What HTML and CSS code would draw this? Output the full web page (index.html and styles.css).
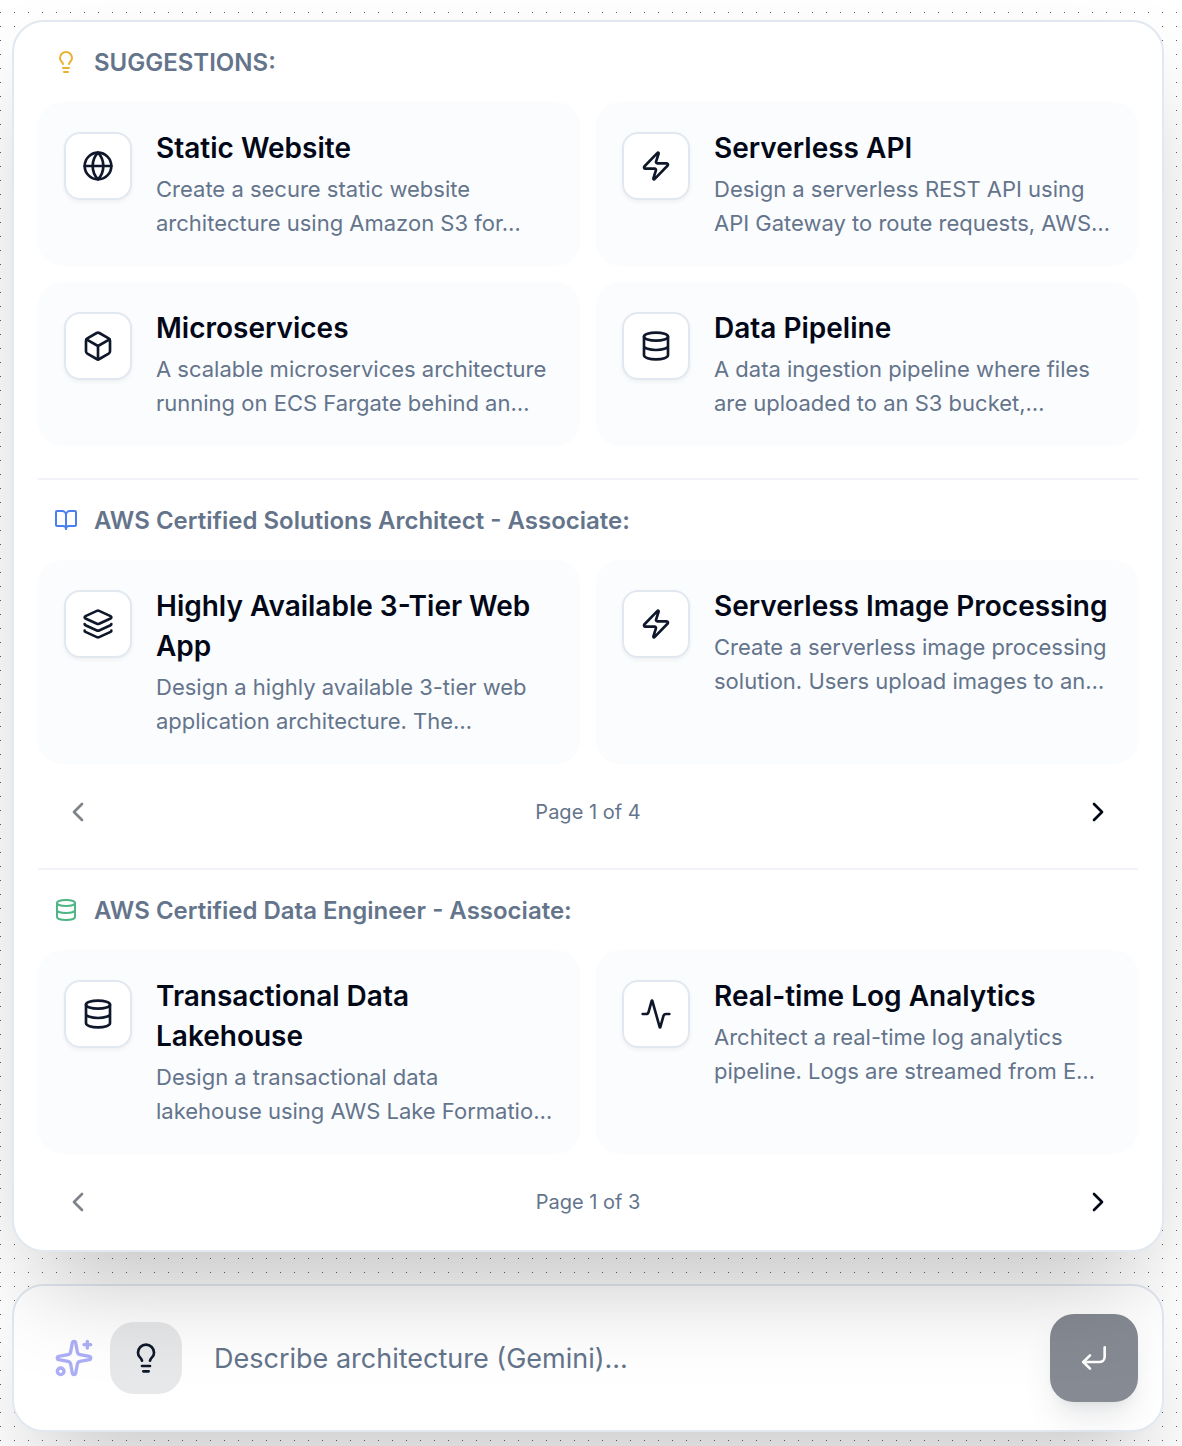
FILE: index.html
```html
<!DOCTYPE html>
<html lang="en">

<head>
    <meta charset="UTF-8">
    <meta name="viewport" content="width=device-width, initial-scale=1.0">
    <title>Architecture suggestions</title>
    <link rel="stylesheet" href="styles.css">
</head>

<body>
    <!-- shared icons -->
    <svg class="sprite" aria-hidden="true">
        <symbol id="bulb" viewBox="0 0 24 24">
            <path d="M15 14c.2-1 .7-1.7 1.5-2.5 1-.9 1.5-2.2 1.5-3.5A6 6 0 0 0 6 8c0 1 .2 2.2 1.5 3.5.7.7 1.3 1.5 1.5 2.5" />
            <path d="M9 18h6M10 22h4" />
        </symbol>
        <symbol id="globe" viewBox="0 0 24 24">
            <circle cx="12" cy="12" r="10" />
            <path d="M12 2a14.5 14.5 0 0 0 0 20 14.5 14.5 0 0 0 0-20M2 12h20" />
        </symbol>
        <symbol id="zap" viewBox="0 0 24 24">
            <path d="M4 14a1 1 0 0 1-.78-1.63l9.9-10.2a.5.5 0 0 1 .86.46l-1.92 6.02A1 1 0 0 0 13 10h7a1 1 0 0 1 .78 1.63l-9.9 10.2a.5.5 0 0 1-.86-.46l1.92-6.02A1 1 0 0 0 11 14z" />
        </symbol>
        <symbol id="box" viewBox="0 0 24 24">
            <path d="M21 8a2 2 0 0 0-1-1.73l-7-4a2 2 0 0 0-2 0l-7 4A2 2 0 0 0 3 8v8a2 2 0 0 0 1 1.73l7 4a2 2 0 0 0 2 0l7-4A2 2 0 0 0 21 16Z" />
            <path d="m3.3 7 8.7 5 8.7-5M12 22V12" />
        </symbol>
        <symbol id="database" viewBox="0 0 24 24">
            <ellipse cx="12" cy="5" rx="9" ry="3" />
            <path d="M3 5v14a9 3 0 0 0 18 0V5M3 12a9 3 0 0 0 18 0" />
        </symbol>
        <symbol id="book" viewBox="0 0 24 24">
            <path d="M12 7v14" />
            <path d="M3 18a1 1 0 0 1-1-1V4a1 1 0 0 1 1-1h5a4 4 0 0 1 4 4 4 4 0 0 1 4-4h5a1 1 0 0 1 1 1v13a1 1 0 0 1-1 1h-6a3 3 0 0 0-3 3 3 3 0 0 0-3-3z" />
        </symbol>
        <symbol id="layers" viewBox="0 0 24 24">
            <path d="M12.83 2.18a2 2 0 0 0-1.66 0L2.6 6.08a1 1 0 0 0 0 1.83l8.58 3.91a2 2 0 0 0 1.66 0l8.58-3.9a1 1 0 0 0 0-1.83z" />
            <path d="M2 12a1 1 0 0 0 .58.91l8.6 3.91a2 2 0 0 0 1.65 0l8.58-3.9A1 1 0 0 0 22 12" />
            <path d="M2 17a1 1 0 0 0 .58.91l8.6 3.91a2 2 0 0 0 1.65 0l8.58-3.9A1 1 0 0 0 22 17" />
        </symbol>
        <symbol id="activity" viewBox="0 0 24 24">
            <path d="M22 12h-2.48a2 2 0 0 0-1.93 1.46l-2.35 8.36a.25.25 0 0 1-.48 0L9.24 2.18a.25.25 0 0 0-.48 0l-2.35 8.36A2 2 0 0 1 4.49 12H2" />
        </symbol>
        <symbol id="chevron-left" viewBox="0 0 24 24">
            <path d="m15 18-6-6 6-6" />
        </symbol>
        <symbol id="chevron-right" viewBox="0 0 24 24">
            <path d="m9 18 6-6-6-6" />
        </symbol>
        <symbol id="sparkles" viewBox="0 0 24 24">
            <path d="M11.017 2.814a1 1 0 0 1 1.966 0l1.051 5.558a2 2 0 0 0 1.594 1.594l5.558 1.051a1 1 0 0 1 0 1.966l-5.558 1.051a2 2 0 0 0-1.594 1.594l-1.051 5.558a1 1 0 0 1-1.966 0l-1.051-5.558a2 2 0 0 0-1.594-1.594l-5.558-1.051a1 1 0 0 1 0-1.966l5.558-1.051a2 2 0 0 0 1.594-1.594z" />
            <path d="M20 2v4M22 4h-4" />
            <circle cx="4" cy="20" r="2" />
        </symbol>
        <symbol id="enter" viewBox="0 0 24 24">
            <path d="M20 4v7a4 4 0 0 1-4 4H4" />
            <path d="m9 10-5 5 5 5" />
        </symbol>
    </svg>

    <main class="page">
        <div class="panel">
            <section class="group">
                <h2 class="group-title">
                    <svg class="icon icon-amber"><use href="#bulb" /></svg>
                    SUGGESTIONS:
                </h2>
                <div class="cards">
                    <button type="button" class="card">
                        <span class="card-icon"><svg class="icon"><use href="#globe" /></svg></span>
                        <span class="card-text">
                            <span class="card-name">Static Website</span>
                            <span class="card-desc">Create a secure static website architecture using Amazon S3 for…</span>
                        </span>
                    </button>
                    <button type="button" class="card">
                        <span class="card-icon"><svg class="icon"><use href="#zap" /></svg></span>
                        <span class="card-text">
                            <span class="card-name">Serverless API</span>
                            <span class="card-desc">Design a serverless REST API using API Gateway to route requests, AWS…</span>
                        </span>
                    </button>
                    <button type="button" class="card">
                        <span class="card-icon"><svg class="icon"><use href="#box" /></svg></span>
                        <span class="card-text">
                            <span class="card-name">Microservices</span>
                            <span class="card-desc">A scalable microservices architecture running on ECS Fargate behind an…</span>
                        </span>
                    </button>
                    <button type="button" class="card">
                        <span class="card-icon"><svg class="icon"><use href="#database" /></svg></span>
                        <span class="card-text">
                            <span class="card-name">Data Pipeline</span>
                            <span class="card-desc">A data ingestion pipeline where files are uploaded to an S3 bucket,…</span>
                        </span>
                    </button>
                </div>
            </section>

            <section class="group">
                <h2 class="group-title">
                    <svg class="icon icon-blue"><use href="#book" /></svg>
                    AWS Certified Solutions Architect - Associate:
                </h2>
                <div class="cards">
                    <button type="button" class="card">
                        <span class="card-icon"><svg class="icon"><use href="#layers" /></svg></span>
                        <span class="card-text">
                            <span class="card-name">Highly Available 3-Tier Web App</span>
                            <span class="card-desc">Design a highly available 3-tier web application architecture. The…</span>
                        </span>
                    </button>
                    <button type="button" class="card">
                        <span class="card-icon"><svg class="icon"><use href="#zap" /></svg></span>
                        <span class="card-text">
                            <span class="card-name">Serverless Image Processing</span>
                            <span class="card-desc">Create a serverless image processing solution. Users upload images to an…</span>
                        </span>
                    </button>
                </div>
                <nav class="pager" aria-label="Solutions Architect pages">
                    <button type="button" class="pager-button" aria-label="Previous page" disabled><svg class="icon"><use href="#chevron-left" /></svg></button>
                    <span>Page 1 of 4</span>
                    <button type="button" class="pager-button" aria-label="Next page"><svg class="icon"><use href="#chevron-right" /></svg></button>
                </nav>
            </section>

            <section class="group">
                <h2 class="group-title">
                    <svg class="icon icon-green"><use href="#database" /></svg>
                    AWS Certified Data Engineer - Associate:
                </h2>
                <div class="cards">
                    <button type="button" class="card">
                        <span class="card-icon"><svg class="icon"><use href="#database" /></svg></span>
                        <span class="card-text">
                            <span class="card-name">Transactional Data<br>Lakehouse</span>
                            <span class="card-desc">Design a transactional data<br>lakehouse using AWS Lake Formatio…</span>
                        </span>
                    </button>
                    <button type="button" class="card">
                        <span class="card-icon"><svg class="icon"><use href="#activity" /></svg></span>
                        <span class="card-text">
                            <span class="card-name">Real-time Log Analytics</span>
                            <span class="card-desc">Architect a real-time log analytics pipeline. Logs are streamed from E…</span>
                        </span>
                    </button>
                </div>
                <nav class="pager" aria-label="Data Engineer pages">
                    <button type="button" class="pager-button" aria-label="Previous page" disabled><svg class="icon"><use href="#chevron-left" /></svg></button>
                    <span>Page 1 of 3</span>
                    <button type="button" class="pager-button" aria-label="Next page"><svg class="icon"><use href="#chevron-right" /></svg></button>
                </nav>
            </section>
        </div>

        <form class="prompt">
            <svg class="icon prompt-sparkles"><use href="#sparkles" /></svg>
            <button type="button" class="prompt-toggle" aria-label="Toggle suggestions"><svg class="icon"><use href="#bulb" /></svg></button>
            <input type="text" class="prompt-input" aria-label="Describe architecture" placeholder="Describe architecture (Gemini)...">
            <button type="submit" class="prompt-send" aria-label="Send" disabled><svg class="icon"><use href="#enter" /></svg></button>
        </form>
    </main>
</body>

</html>
```
FILE: styles.css
```css
* {
    box-sizing: border-box;
}

body {
    margin: 0;
    font-family: Inter, "Liberation Sans", sans-serif;
    color: #020817;
    background-color: #fff;
    background-image: radial-gradient(circle at 0 0, #606060 1px, transparent 1px);
    background-size: 14px 14px;
    background-position: 0 12px;
}

button,
input {
    font: inherit;
    color: inherit;
    border: none;
    background: none;
    padding: 0;
}

.sprite {
    display: none;
}

.icon {
    display: block;
    flex-shrink: 0;
    width: 32px;
    height: 32px;
    fill: none;
    stroke: currentColor;
    stroke-width: 2;
    stroke-linecap: round;
    stroke-linejoin: round;
}

.page {
    display: flex;
    flex-direction: column;
    gap: 32px;
    min-height: 100vh;
    padding: 20px 18px 14px 12px;
    overflow: hidden;
}

.panel,
.prompt {
    border: 2px solid #e2e8f0;
    border-radius: 32px;
    background-color: #fff;
    box-shadow: 0 50px 100px -24px rgba(0, 0, 0, 0.25);
}

/* the panel floats over the prompt, its shadow falls on it */
.panel {
    position: relative;
    z-index: 1;
    padding: 0 24px 16px;
}

.group + .group {
    border-top: 2px solid #f1f3f8;
}

.group:first-child {
    padding-bottom: 32px;
}

.group:nth-child(2) {
    padding-bottom: 24px;
}

.group-title {
    display: flex;
    align-items: center;
    gap: 16px;
    height: 80px;
    margin: 0;
    padding: 0 16px;
    font-size: 24px;
    font-weight: 600;
    color: #64748b;
}

.group-title .icon {
    width: 24px;
    height: 24px;
}

.icon-amber {
    color: #eab030;
}

.icon-blue {
    color: #4a7ff0;
}

.icon-green {
    color: #50b585;
}

.cards {
    display: grid;
    grid-template-columns: 1fr 1fr;
    gap: 16px;
}

.card {
    display: flex;
    align-items: flex-start;
    gap: 24px;
    padding: 26px;
    border-radius: 24px;
    background-color: #fbfcfe;
    text-align: left;
}

.card-icon {
    margin-top: 4px;
    padding: 16px;
    border: 2px solid #e2e8f0;
    border-radius: 16px;
    background-color: #fff;
    color: #0f172a;
    box-shadow: 0 2px 4px rgba(0, 0, 0, 0.05);
}

.card-text {
    display: flex;
    flex-direction: column;
    gap: 4px;
    min-width: 0;
}

.card-name {
    font-size: 28px;
    font-weight: 600;
    line-height: 40px;
}

.card-desc {
    font-size: 22px;
    line-height: 34px;
    color: #64748b;
}

.pager {
    display: flex;
    align-items: center;
    justify-content: space-between;
    margin-top: 16px;
    padding: 0 8px;
    font-size: 20px;
    color: #64748b;
}

.pager-button {
    padding: 16px;
    color: #020817;
}

.pager-button:disabled {
    opacity: 0.5;
}

.prompt {
    display: flex;
    align-items: center;
    padding: 28px 24px 28px 40px;
}

.prompt-sparkles {
    width: 40px;
    height: 40px;
    margin-right: 16px;
    color: #adaff6;
}

.prompt-toggle {
    padding: 20px;
    border-radius: 24px;
    background-color: #e7e8ea;
    color: #0f172a;
}

.prompt-input {
    flex: 1;
    min-width: 0;
    padding: 0 32px;
    font-size: 27px;
    outline: none;
}

.prompt-input::placeholder {
    color: #64748b;
    opacity: 1;
}

.prompt-send {
    padding: 28px;
    border-radius: 24px;
    background-color: #0f172a;
    color: #fff;
    opacity: 0.5;
    box-shadow: 0 20px 30px -6px rgba(15, 23, 42, 0.2), 0 8px 12px -8px rgba(15, 23, 42, 0.2);
}
```
